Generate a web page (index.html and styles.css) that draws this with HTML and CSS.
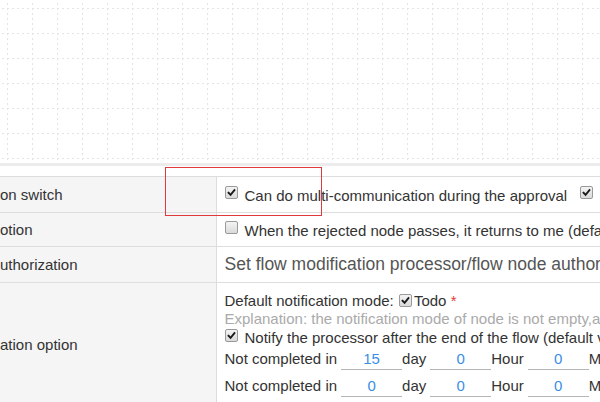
FILE: index.html
```html
<!DOCTYPE html>
<html lang="en">
<head>
<meta charset="utf-8">
<title>Flow node settings</title>
<link rel="stylesheet" href="styles.css">
</head>
<body>
<div class="canvas">
  <svg class="grid" width="100%" height="100%" aria-hidden="true">
    <defs>
      <pattern id="dots" width="25" height="25" x="7" y="8" patternUnits="userSpaceOnUse">
        <line x1="0" y1="0.5" x2="25" y2="0.5" stroke="#e4e4e4" stroke-width="1.2" stroke-dasharray="2 3"/>
        <line x1="0.5" y1="0" x2="0.5" y2="25" stroke="#e4e4e4" stroke-width="1.2" stroke-dasharray="2 3"/>
      </pattern>
    </defs>
    <rect width="100%" height="100%" fill="url(#dots)"/>
  </svg>
</div>

<table class="form">
  <colgroup><col class="c-label"><col class="c-value"></colgroup>
  <tr class="r1">
    <td class="label">on switch</td>
    <td class="value">
      <span class="opt"><span class="cb on"><svg viewBox="0 0 13 13"><path d="M3 6.8 L5.4 9.2 L10 3.6"/></svg></span>Can do multi-communication during the approval</span><span class="opt"><span class="cb on"><svg viewBox="0 0 13 13"><path d="M3 6.8 L5.4 9.2 L10 3.6"/></svg></span>Can add sign</span>
    </td>
  </tr>
  <tr class="r2">
    <td class="label">otion</td>
    <td class="value">
      <span class="opt"><span class="cb"></span>When the rejected node passes, it returns to me (default)</span>
    </td>
  </tr>
  <tr class="r3">
    <td class="label">uthorization</td>
    <td class="value big">Set flow modification processor/flow node authorization</td>
  </tr>
  <tr class="r4">
    <td class="label">ation option</td>
    <td class="value stack">
      <div class="line">Default notification mode: <span class="cb on inl"><svg viewBox="0 0 13 13"><path d="M3 6.8 L5.4 9.2 L10 3.6"/></svg></span>Todo <span class="req">*</span></div>
      <div class="line hint">Explanation: the notification mode of node is not empty,and it will be used first</div>
      <div class="line l3"><span class="opt"><span class="cb on"><svg viewBox="0 0 13 13"><path d="M3 6.8 L5.4 9.2 L10 3.6"/></svg></span>Notify the processor after the end of the flow (default value)</span></div>
      <div class="timer">Not completed in<input class="num" value="15">day<input class="num" value="0">Hour<input class="num" value="0">Minute, remind</div>
      <div class="timer">Not completed in<input class="num" value="0">day<input class="num" value="0">Hour<input class="num" value="0">Minute, remind</div>
    </td>
  </tr>
</table>

<div class="highlight"></div>
</body>
</html>
```

FILE: styles.css
```css
html, body {
  margin: 0;
  padding: 0;
  width: 600px;
  height: 402px;
  overflow: hidden;
  background: #fff;
  font-family: "Liberation Sans", Arial, sans-serif;
  font-size: 15px;
  color: #333;
  position: relative;
}

.canvas {
  height: 163px;
  border-bottom: 3px solid #ececec;
  background: #fff;
}

.grid {
  display: block;
}

.form {
  margin-top: 10px;
  border-collapse: collapse;
  table-layout: fixed;
  width: 1100px;
}

.c-label { width: 216px; }

.form td {
  border-top: 1px solid #ddd;
  border-bottom: 1px solid #ddd;
  white-space: nowrap;
  overflow: hidden;
  padding: 0 8px;
  vertical-align: middle;
}

.form td.label {
  background: #f5f5f5;
  border-right: 1px solid #ddd;
  padding: 0;
  color: #333;
}

.r1 td { height: 35px; }
.r2 td { height: 33px; }
.r3 td { height: 35px; }

.value.big {
  font-size: 17.5px;
  color: #555;
}

.value.stack {
  padding: 9px 8px 4px;
  vertical-align: top;
}

.r4 td.label { vertical-align: middle; }

.opt {
  display: inline-flex;
  align-items: center;
  margin-right: 13px;
}

.cb {
  display: inline-block;
  box-sizing: border-box;
  width: 13px;
  height: 13px;
  border: 1px solid #9a9a9a;
  border-radius: 2px;
  background: linear-gradient(#f4f4f4, #dadada);
  margin: 0 7px 5px 0;
  flex: none;
}

.cb svg {
  display: block;
  width: 11px;
  height: 11px;
}

.cb svg path {
  fill: none;
  stroke: #1a1a1a;
  stroke-width: 2.2;
  stroke-linecap: square;
}

.cb.inl {
  margin: 0 2px 0 1px;
  vertical-align: -1px;
}

.line {
  height: 18px;
  line-height: 18px;
}

.line.l3 { height: 19px; }

.hint { color: #aaa; }

.req { color: #e53935; }

.timer {
  display: flex;
  align-items: flex-start;
  height: 27px;
  line-height: 23px;
}

.num {
  box-sizing: border-box;
  width: 61px;
  height: 23px;
  margin: 0 0 0 4px;
  padding: 0;
  border: none;
  border-bottom: 1px solid #b5b5b5;
  font: inherit;
  line-height: 22px;
  color: #3a8ee6;
  text-align: center;
  background: transparent;
  outline: none;
}

.num + * { margin-left: 0; }

.timer .num:not(:first-of-type) { margin-left: 4px; }

.highlight {
  position: absolute;
  left: 165px;
  top: 167px;
  width: 157px;
  height: 49px;
  box-sizing: border-box;
  border: 1px solid #e0393e;
  pointer-events: none;
}
```
